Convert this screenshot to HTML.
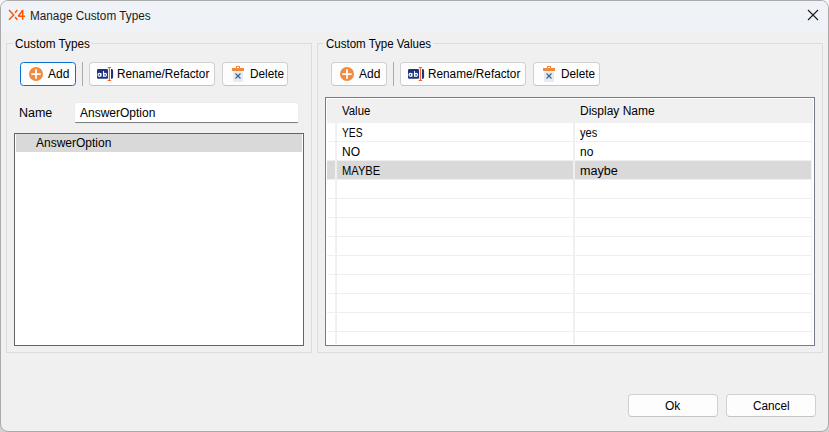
<!DOCTYPE html>
<html><head><meta charset="utf-8">
<style>
*{box-sizing:border-box;margin:0;padding:0}
html,body{width:829px;height:432px;overflow:hidden;background:linear-gradient(#f6f6f6 0,#f6f6f6 50%,#d2d2d2 50%,#d2d2d2 100%)}
body{position:relative;font-family:"Liberation Sans",sans-serif;font-size:12px;color:#000}
.win{position:absolute;left:0;top:0;width:829px;height:432px;background:#f0f0f0;border:1px solid #aaaaaa;border-radius:8px;overflow:hidden}
.title{position:absolute;left:0;top:0;width:827px;height:30px;background:#eff3f7}
.a{position:absolute}
.t{position:absolute;white-space:nowrap;line-height:14px;font-size:12px}
.grp{position:absolute;border:1px solid #dcdcdc}
.btn{position:absolute;height:24px;background:#fdfdfd;border:1px solid #d0d0d0;border-bottom-color:#c4c4c4;border-radius:4px}
.btn.focus{border:1px solid #0b6fd3;border-radius:3.5px}
.sep{position:absolute;width:1px;height:24px;background:#ababab}
.hl{position:absolute;height:1px;background:#efefef}
.vl{position:absolute;width:2px;background:linear-gradient(90deg,#eaf2fc 50%,#efefef 50%)}
.vlx{position:absolute;width:1px;background:#eef3fa}
</style></head><body>
<div class="win">
  <div class="title"></div>
</div>
<!-- logo X4 -->
<svg class="a" style="left:0;top:0" width="30" height="30" viewBox="0 0 30 30">
  <path d="M9 10 L13.7 14.9 L9 19.8 M17.3 10 L15 12.9 M15 16.9 L17.5 19.8" stroke="#ff5500" stroke-width="1.5" fill="none" stroke-linecap="butt"/>
  <path d="M22.7 10 V19.8 M22.6 10.3 L18.3 16.2 M18.2 16.3 H25" stroke="#ff5500" stroke-width="1.5" fill="none"/>
</svg>
<div class="t" style="transform:scaleX(0.979);transform-origin:0 0;left:30px;top:9px;color:#1a1a1a">Manage Custom Types</div>
<!-- close -->
<svg class="a" style="left:807px;top:9px" width="12" height="12" viewBox="0 0 12 12">
  <path d="M1 1 L11 11 M11 1 L1 11" stroke="#1a1a1a" stroke-width="1.1" fill="none"/>
</svg>

<!-- left group -->
<div class="grp" style="left:6px;top:43px;width:306px;height:310px"></div>
<div class="a" style="left:13px;top:36px;width:78px;height:14px;background:#f0f0f0"></div>
<div class="t" style="transform:scaleX(0.979);transform-origin:0 0;left:15px;top:37px">Custom Types</div>

<div class="btn focus" style="left:20px;top:62px;width:56px"></div>
<svg class="a" style="left:29px;top:67px" width="14" height="14" viewBox="0 0 14 14">
  <circle cx="7" cy="7" r="7" fill="#f28b3e"/>
  <path d="M7 2.3 V11.7 M2.3 7 H11.7" stroke="#fff" stroke-width="1.75"/>
</svg>
<div class="t" style="left:48px;top:67px">Add</div>
<div class="sep" style="left:82px;top:62px"></div>
<div class="btn" style="left:89px;top:62px;width:126px"></div>
<svg class="a" style="left:96px;top:66px" width="18" height="16" viewBox="0 0 18 16">
  <rect x="1" y="3" width="11" height="9.8" rx="1.2" fill="#1e327e"/>
  <path d="M15 3 H16 Q17.1 3.5 17.1 5 V11 Q17.1 12.5 16 12.8 H15 Z" fill="#1e327e"/>
  <ellipse cx="3.4" cy="8.8" rx="1.35" ry="1.5" fill="none" stroke="#fff" stroke-width="1.2"/>
  <path d="M4.9 7 V10.8" stroke="#fff" stroke-width="1.1"/>
  <path d="M7.5 5.1 V10.8" stroke="#fff" stroke-width="1.1"/>
  <ellipse cx="9.1" cy="8.8" rx="1.4" ry="1.5" fill="none" stroke="#fff" stroke-width="1.2"/>
  <path d="M13.4 1.5 V14.5 M11.7 1.5 H15.1 M11.7 14.5 H15.1" stroke="#ff5a1a" stroke-width="1.1"/>
</svg>
<div class="t" style="transform:scaleX(0.982);transform-origin:0 0;left:117px;top:67px">Rename/Refactor</div>
<div class="btn" style="left:222px;top:62px;width:66px"></div>
<svg class="a" style="left:231px;top:65px" width="14" height="18" viewBox="0 0 14 18">
  <rect x="2" y="6" width="10" height="11" rx="1" fill="#e3ebf5"/>
  <rect x="1" y="3" width="12" height="3" fill="#f08a3a"/>
  <rect x="5.5" y="1.5" width="3" height="2" fill="#fff" stroke="#f08a3a" stroke-width="1"/>
  <path d="M4.5 8.5 L9.5 13.5 M9.5 8.5 L4.5 13.5" stroke="#44617e" stroke-width="1.15"/>
</svg>
<div class="t" style="transform:scaleX(0.98);transform-origin:0 0;left:250px;top:67px">Delete</div>

<div class="t" style="transform:scaleX(1.04);transform-origin:0 0;left:19px;top:106px">Name</div>
<div class="a" style="left:75px;top:103px;width:223px;height:20px;background:#fff;border-radius:2px 2px 1px 1px;border-bottom:1px solid #7c7c7c;box-shadow:0 0 0 0.5px #e8e8e8"></div>
<div class="t" style="left:80px;top:106px">AnswerOption</div>

<div class="a" style="left:14px;top:133px;width:290px;height:213px;background:#fff;border:1px solid #646464"></div>
<div class="a" style="left:16px;top:134px;width:286px;height:18px;background:#d9d9d9"></div>
<div class="t" style="left:36px;top:136px">AnswerOption</div>

<!-- right group -->
<div class="grp" style="left:317px;top:43px;width:506px;height:310px"></div>
<div class="a" style="left:323px;top:36px;width:110px;height:14px;background:#f0f0f0"></div>
<div class="t" style="transform:scaleX(0.959);transform-origin:0 0;left:326px;top:37px">Custom Type Values</div>

<div class="btn" style="left:331px;top:62px;width:56px"></div>
<svg class="a" style="left:340px;top:67px" width="14" height="14" viewBox="0 0 14 14">
  <circle cx="7" cy="7" r="7" fill="#f28b3e"/>
  <path d="M7 2.3 V11.7 M2.3 7 H11.7" stroke="#fff" stroke-width="1.75"/>
</svg>
<div class="t" style="left:359px;top:67px">Add</div>
<div class="sep" style="left:393px;top:62px"></div>
<div class="btn" style="left:400px;top:62px;width:126px"></div>
<svg class="a" style="left:407px;top:66px" width="18" height="16" viewBox="0 0 18 16">
  <rect x="1" y="3" width="11" height="9.8" rx="1.2" fill="#1e327e"/>
  <path d="M15 3 H16 Q17.1 3.5 17.1 5 V11 Q17.1 12.5 16 12.8 H15 Z" fill="#1e327e"/>
  <ellipse cx="3.4" cy="8.8" rx="1.35" ry="1.5" fill="none" stroke="#fff" stroke-width="1.2"/>
  <path d="M4.9 7 V10.8" stroke="#fff" stroke-width="1.1"/>
  <path d="M7.5 5.1 V10.8" stroke="#fff" stroke-width="1.1"/>
  <ellipse cx="9.1" cy="8.8" rx="1.4" ry="1.5" fill="none" stroke="#fff" stroke-width="1.2"/>
  <path d="M13.4 1.5 V14.5 M11.7 1.5 H15.1 M11.7 14.5 H15.1" stroke="#ff5a1a" stroke-width="1.1"/>
</svg>
<div class="t" style="transform:scaleX(0.982);transform-origin:0 0;left:428px;top:67px">Rename/Refactor</div>
<div class="btn" style="left:533px;top:62px;width:67px"></div>
<svg class="a" style="left:542px;top:65px" width="14" height="18" viewBox="0 0 14 18">
  <rect x="2" y="6" width="10" height="11" rx="1" fill="#e3ebf5"/>
  <rect x="1" y="3" width="12" height="3" fill="#f08a3a"/>
  <rect x="5.5" y="1.5" width="3" height="2" fill="#fff" stroke="#f08a3a" stroke-width="1"/>
  <path d="M4.5 8.5 L9.5 13.5 M9.5 8.5 L4.5 13.5" stroke="#44617e" stroke-width="1.15"/>
</svg>
<div class="t" style="transform:scaleX(0.98);transform-origin:0 0;left:561px;top:67px">Delete</div>

<!-- table -->
<div class="a" style="left:325px;top:97px;width:490px;height:249px;background:#fff;border:1px solid #767c8a"></div>
<div class="a" style="left:327px;top:99px;width:486px;height:24px;background:#f0f0f0"></div>
<div class="t" style="transform:scaleX(0.95);transform-origin:0 0;left:342px;top:104px">Value</div>
<div class="t" style="left:580px;top:104px">Display Name</div>
<div class="a" style="left:327px;top:161px;width:484px;height:18px;background:#d9d9d9"></div>
<div class="hl" style="left:327px;top:141px;width:484px"></div>
<div class="hl" style="left:327px;top:160px;width:484px"></div>
<div class="hl" style="left:327px;top:179px;width:484px"></div>
<div class="hl" style="left:327px;top:198px;width:484px"></div>
<div class="hl" style="left:327px;top:217px;width:484px"></div>
<div class="hl" style="left:327px;top:236px;width:484px"></div>
<div class="hl" style="left:327px;top:255px;width:484px"></div>
<div class="hl" style="left:327px;top:274px;width:484px"></div>
<div class="hl" style="left:327px;top:293px;width:484px"></div>
<div class="hl" style="left:327px;top:312px;width:484px"></div>
<div class="hl" style="left:327px;top:331px;width:484px"></div>
<div class="vl" style="left:335px;top:123px;height:221px"></div>
<div class="vl" style="left:573px;top:123px;height:221px"></div>
<div class="vlx" style="left:811px;top:123px;height:221px"></div>
<div class="t" style="transform:scaleX(0.855);transform-origin:0 0;left:342px;top:126px">YES</div>
<div class="t" style="transform:scaleX(0.92);transform-origin:0 0;left:580px;top:126px">yes</div>
<div class="t" style="left:342px;top:145px">NO</div>
<div class="t" style="left:580px;top:145px">no</div>
<div class="t" style="transform:scaleX(0.93);transform-origin:0 0;left:342px;top:164px">MAYBE</div>
<div class="t" style="transform:scaleX(1.05);transform-origin:0 0;left:580px;top:164px">maybe</div>

<!-- bottom buttons -->
<div class="btn" style="left:628px;top:394px;width:90px;height:23px"></div>
<div class="t" style="left:665px;top:399px">Ok</div>
<div class="btn" style="left:726px;top:394px;width:90px;height:23px"></div>
<div class="t" style="transform:scaleX(0.98);transform-origin:0 0;left:753px;top:399px">Cancel</div>
</body></html>
